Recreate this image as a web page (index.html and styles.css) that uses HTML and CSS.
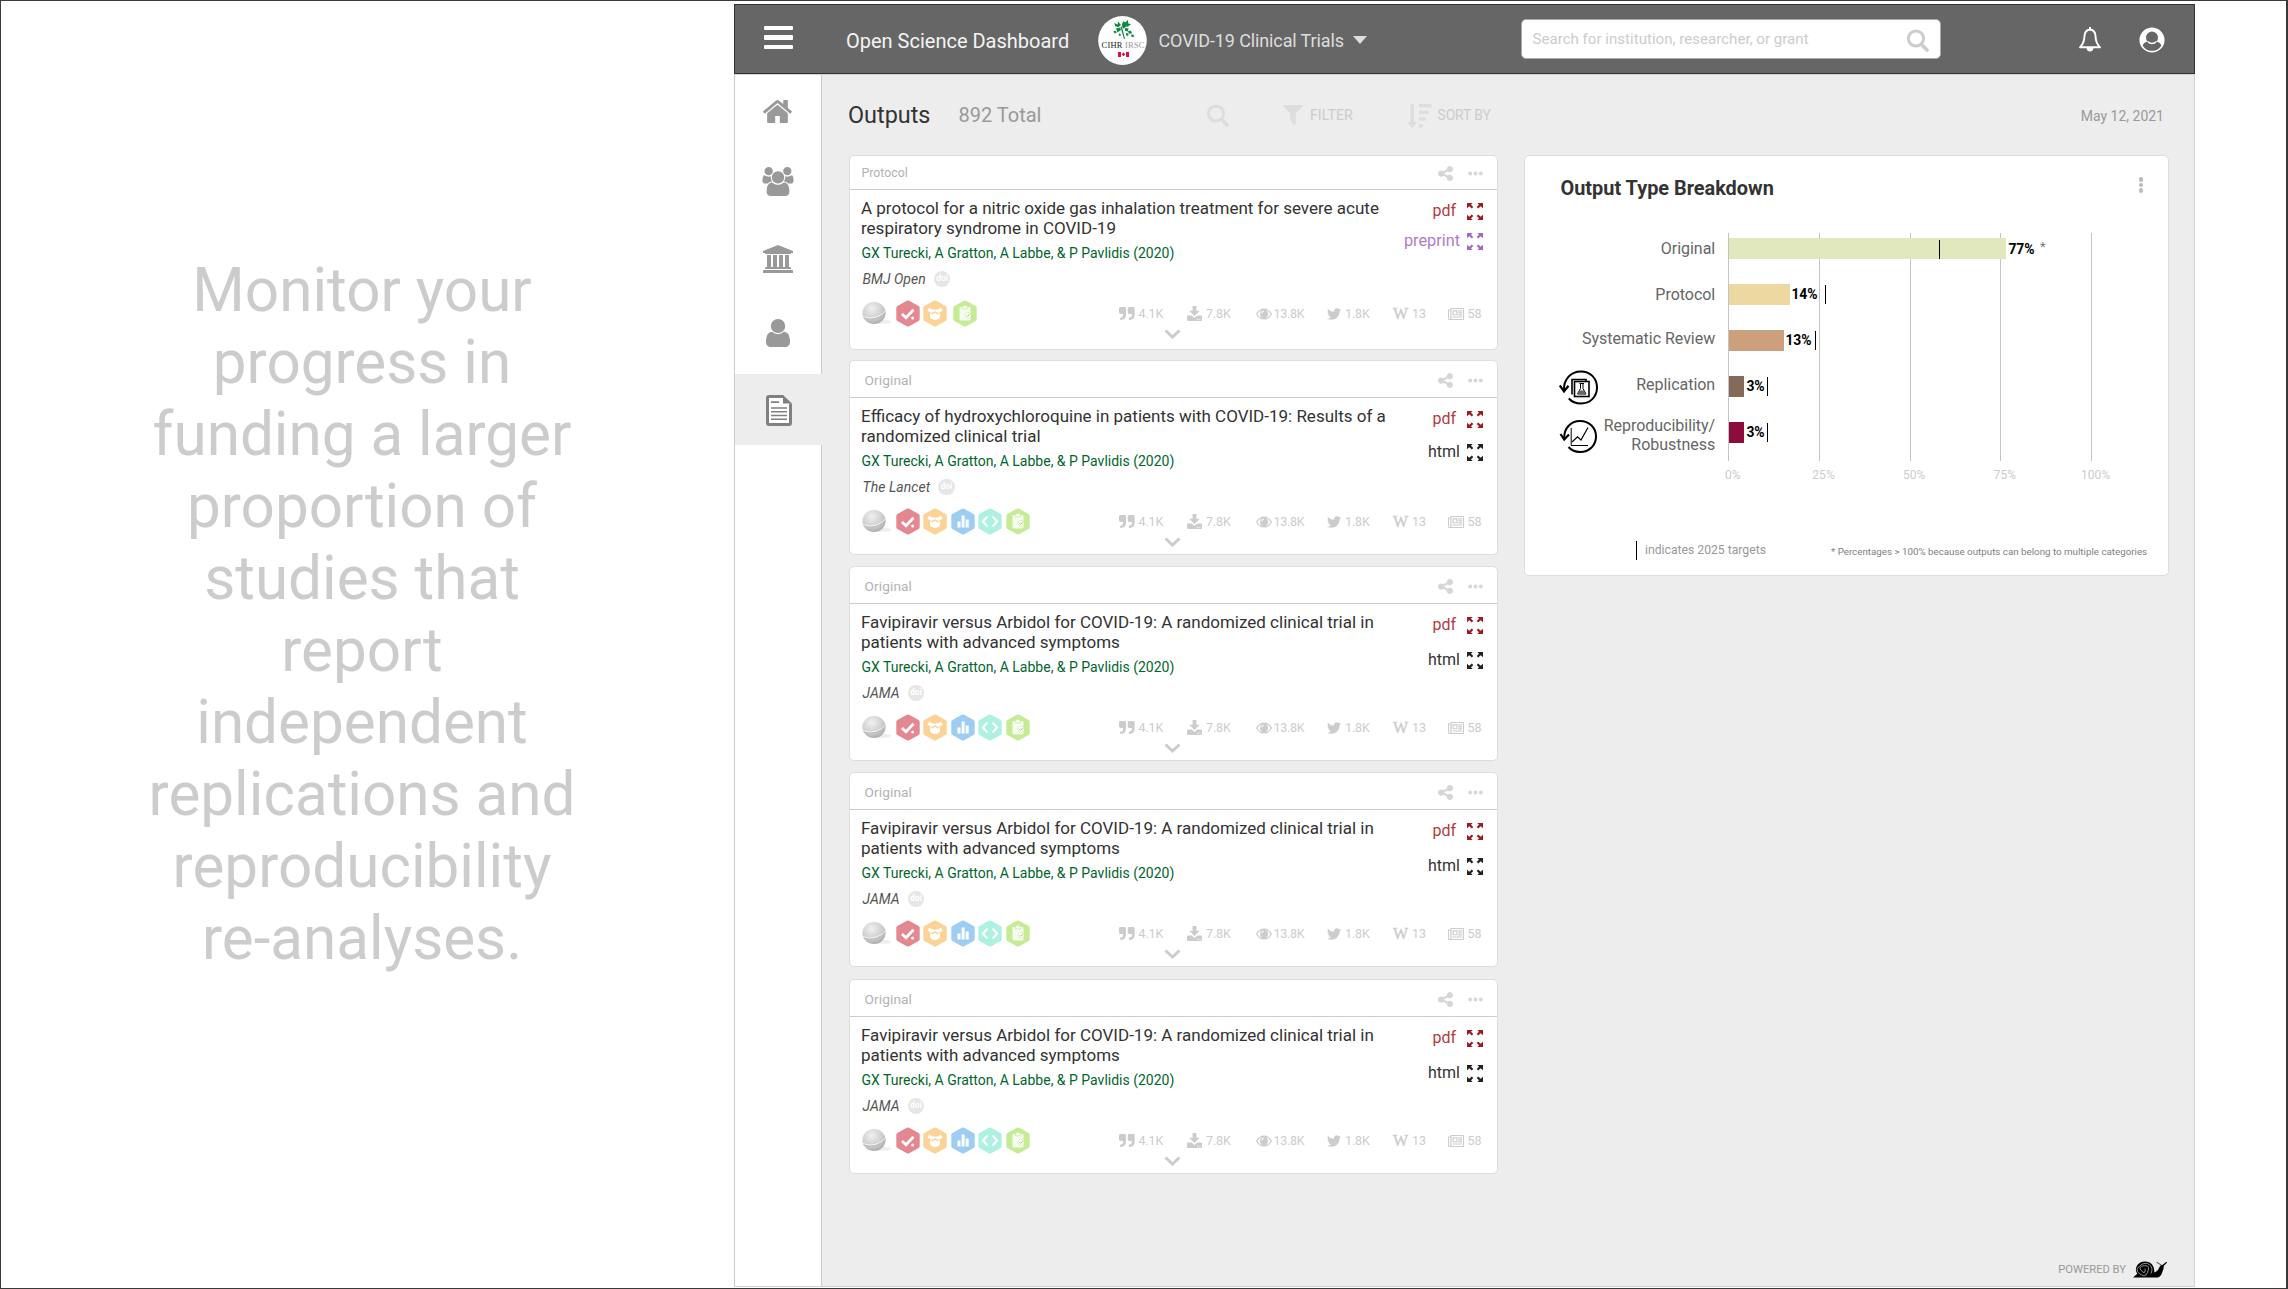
FILE: index.html
```
<!DOCTYPE html>
<html lang="en">
<head>
<meta charset="utf-8">
<title>Open Science Dashboard</title>
<link rel="stylesheet" href="styles.css">
</head>
<body>
<svg class="sprite" aria-hidden="true">
  <defs>
    <radialGradient id="ball-fill" cx=".4" cy=".3" r=".75"><stop offset="0" stop-color="#f0f0f0"/><stop offset=".6" stop-color="#cfcfcf"/><stop offset="1" stop-color="#a8a8a8"/></radialGradient>
  </defs>
  <symbol id="i-home" viewBox="89 253 1614 1283" preserveAspectRatio="none"><path d="M1472 992v480q0 26-19 45t-45 19h-384v-384h-256v384h-384q-26 0-45-19t-19-45v-480q0-1 .5-3t.5-3l575-474 575 474q1 2 1 6zm223-69l-62 74q-8 9-21 11h-3q-13 0-21-7l-692-577-692 577q-12 8-24 7-13-2-21-11l-62-74q-8-10-7-23.5t11-21.5l719-599q32-26 76-26t76 26l244 204v-195q0-14 9-23t23-9h192q14 0 23 9t9 23v408l219 182q10 8 11 21.5t-7 23.5z"/></symbol>
  <symbol id="i-users" viewBox="0 0 1920 1792"><path d="M593 896q-162 5-265 128h-134q-82 0-138-40.5t-56-118.5q0-353 124-353 6 0 43.5 21t97.5 42.5 119 21.5q67 0 133-23-5 37-5 66 0 139 81 256zm1071 637q0 120-73 189.5t-194 69.5h-874q-121 0-194-69.5t-73-189.5q0-53 3.5-103.5t14-109 26.5-108.5 43-97.5 62-81 85.5-53.5 111.5-20q10 0 43 21.5t73 48 107 48 135 21.5 135-21.5 107-48 73-48 43-21.5q61 0 111.5 20t85.5 53.5 62 81 43 97.5 26.5 108.5 14 109 3.5 103.5zm-1024-1277q0 106-75 181t-181 75-181-75-75-181 75-181 181-75 181 75 75 181zm704 384q0 159-112.5 271.5t-271.5 112.5-271.5-112.5-112.5-271.5 112.5-271.5 271.5-112.5 271.5 112.5 112.5 271.5zm576 225q0 78-56 118.5t-138 40.5h-134q-103-123-265-128 81-117 81-256 0-29-5-66 66 23 133 23 59 0 119-21.5t97.5-42.5 43.5-21q124 0 124 353zm-128-609q0 106-75 181t-181 75-181-75-75-181 75-181 181-75 181 75 75 181z"/></symbol>
  <symbol id="i-bank" viewBox="0 0 1920 1792"><path d="M960 0l960 384v128h-128q0 26-20.5 45t-48.5 19h-1526q-28 0-48.5-19t-20.5-45h-128v-128zm-704 640h256v768h128v-768h256v768h128v-768h256v768h128v-768h256v768h59q28 0 48.5 19t20.5 45v64h-1664v-64q0-26 20.5-45t48.5-19h59v-768zm1595 960q28 0 48.5 19t20.5 45v128h-1920v-128q0-26 20.5-45t48.5-19h1782z"/></symbol>
  <symbol id="i-user" viewBox="256 128 1280 1536" preserveAspectRatio="none"><path d="M1536 1399q0 109-62.5 187t-150.5 78h-854q-88 0-150.5-78t-62.5-187q0-85 8.5-160.5t31.5-152 58.5-131 94-89 134.5-34.5q131 128 313 128t313-128q76 0 134.5 34.5t94 89 58.5 131 31.5 152 8.5 160.5zm-256-887q0 159-112.5 271.5t-271.5 112.5-271.5-112.5-112.5-271.5 112.5-271.5 271.5-112.5 271.5 112.5 112.5 271.5z"/></symbol>
  <symbol id="i-doc" viewBox="0 0 26 31"><path fill="#fff" d="M1.5 1.5H18L24.500 8V29.500H1.500Z"/><path fill="none" stroke="currentColor" stroke-width="3" stroke-linejoin="round" d="M17.500 1.500H3Q1.500 1.500 1.500 3V28Q1.500 29.500 3 29.500H23Q24.500 29.500 24.500 28V8.500"/><path d="M17 0L26 8.500H17Z"/><path d="M5 6.300h8v1.800H5zM5 12.200h16v1.500H5zM5 16h16v1.500H5zM5 19.800h16v1.500H5zM5 23.500h16V25H5z"/></symbol>
  <symbol id="i-search" viewBox="0 0 23 23"><circle cx="10" cy="9.500" r="7.600" fill="none" stroke="currentColor" stroke-width="3"/><path d="M15.500 15.500l5.500 5.500" stroke="currentColor" stroke-width="3.600" stroke-linecap="round"/></symbol>
  <symbol id="i-filter" viewBox="192 256 1408 1408" preserveAspectRatio="none"><path d="M1595 295q17 41-14 70l-493 493v742q0 42-39 59-13 5-25 5-27 0-45-19l-256-256q-19-19-19-45v-486l-493-493q-31-29-14-70 17-39 59-39h1280q42 0 59 39z"/></symbol>
  <symbol id="i-sort" viewBox="0 0 25 25"><path d="M3.500 1h3.500v18h3L5.200 25 .4 19h3.100zM12 1h12.500v3.500H12zM12 7.700h9.500v3.300H12zM12 14.500h6.500v3.300H12zM12 21.200h3.800v3.300H12z"/></symbol>
  <symbol id="i-share" viewBox="128 128 1536 1536"><path d="M1344 1024q133 0 226.500 93.500t93.500 226.500-93.500 226.500-226.500 93.500-226.500-93.500-93.500-226.500q0-12 2-34l-360-180q-92 86-218 86-133 0-226.500-93.500t-93.500-226.500 93.500-226.500 226.500-93.500q126 0 218 86l360-180q-2-22-2-34 0-133 93.500-226.500t226.500-93.500 226.500 93.500 93.500 226.500-93.500 226.500-226.500 93.500q-126 0-218-86l-360 180q2 22 2 34t-2 34l360 180q92-86 218-86z"/></symbol>
  <symbol id="i-dots" viewBox="0 0 15 5"><circle cx="2.200" cy="2.500" r="1.900"/><circle cx="7.500" cy="2.500" r="1.900"/><circle cx="12.800" cy="2.500" r="1.900"/></symbol>
  <symbol id="i-expand" viewBox="0 0 16 17"><g id="corner"><path d="M0 0h5.600L4 1.700l2.300 2.400-1.500 1.500-2.500-2.400L0 5.300z"/></g><use href="#corner" transform="matrix(-1 0 0 1 16 0)"/><use href="#corner" transform="matrix(1 0 0 -1 0 17)"/><use href="#corner" transform="matrix(-1 0 0 -1 16 17)"/></symbol>
  <symbol id="i-quote" viewBox="0 0 16 13"><path id="qm" d="M1.400 0h4.200Q7 0 7 1.400V7.500Q7 12.500 2 13H1.200v-2.600H2Q4.200 10 4.200 7.400V7H1.400Q0 7 0 5.600V1.400Q0 0 1.400 0z"/><use href="#qm" x="8.700"/></symbol>
  <symbol id="i-download" viewBox="0 0 15 15"><path d="M5.600 0h3.800v4.700h3.400L7.500 10 2.200 4.700h3.400z"/><path fill-rule="evenodd" d="M1 9.500h3.600l2.900 2.400 2.900-2.400H14q1 0 1 1V14q0 1-1 1H1q-1 0-1-1v-3.500q0-1 1-1zM10 12.700v1.100h1.100v-1.100zM12.300 12.700v1.100h1.100v-1.100z"/></symbol>
  <symbol id="i-eye" viewBox="0 0 16 12"><path fill-rule="evenodd" d="M0 6Q3 .5 8 .5T16 6Q13 11.500 8 11.500T0 6zM1.500 6Q3.300 9.600 6 10.100 3.900 8.800 3.900 6T6 1.900Q3.300 2.400 1.500 6zM14.500 6Q12.700 2.400 10 1.900 12.100 3.200 12.100 6T10 10.100Q12.700 9.600 14.500 6zM8 2.700Q5.400 2.900 5.300 5.600l.8.100Q6.200 3.700 8 3.500z"/></symbol>
  <symbol id="i-twitter" viewBox="108 256 1576 1280"><path d="M1684 408q-67 98-162 167 1 14 1 42 0 130-38 259.500t-115.500 248.500-184.500 210.500-258 146-323 54.500q-271 0-496-145 35 4 78 4 225 0 401-138-105-2-188-64.500t-114-159.500q33 5 61 5 43 0 85-11-112-23-185.500-111.500t-73.500-205.500v-4q68 38 146 41-66-44-105-115t-39-154q0-88 44-163 121 149 294.500 238.500t371.500 99.500q-8-38-8-74 0-134 94.500-228.500t228.500-94.500q140 0 236 102 109-21 205-78-37 115-142 178 93-10 186-50z"/></symbol>
  <symbol id="i-news" viewBox="0 0 16 12"><path fill-rule="evenodd" d="M2.500 0H15q1 0 1 1v10q0 1-1 1H1.500Q0 12 0 10.500V1.500h2.500zM3.500 1.100V10.900H14.900V1.100zM1 2.500v8q0 .5.500.5t.8-.5v-8z"/><path fill-rule="evenodd" d="M4.500 2.300h5v5h-5zM5.600 3.400v2.800h2.800V3.400zM10.300 2.300h3.700v1.200h-3.700zM10.300 4.300h3.700v1.200h-3.700zM10.300 6.200h3.700v1.200h-3.700zM4.500 8.400h9.500v1.200H4.500z"/></symbol>
  <symbol id="i-chevron" viewBox="0 0 17 10"><path d="M1.500 1.500l7 6.500 7-6.500" fill="none" stroke="currentColor" stroke-width="3"/></symbol>
  <symbol id="i-ball" viewBox="0 0 30 24"><ellipse cx="20" cy="20.800" rx="9.500" ry="2" fill="#eee"/><ellipse cx="12" cy="12" rx="11.600" ry="11" fill="url(#ball-fill)"/><path d="M.8 15.500Q7 18.500 14 16.200T23.300 10" fill="none" stroke="#f6f6f6" stroke-width="1"/><path d="M1.300 16.800Q8 19.500 14.500 17.300T23.500 11.500" fill="none" stroke="#b5b5b5" stroke-width=".7"/></symbol>
  <symbol id="hex" viewBox="0 0 24 27"><path d="M10.800.8Q12 .2 13.200.8L22.600 6Q23.700 6.700 23.700 8V19Q23.700 20.300 22.600 21L13.200 26.200Q12 26.800 10.800 26.200L1.400 21Q.3 20.300.3 19V8Q.3 6.700 1.400 6Z"/></symbol>
  <symbol id="b-check" viewBox="0 0 24 27"><use href="#hex" fill="#e48790" width="24" height="27"/><path d="M6 14l4 3.800 7.500-8" fill="none" stroke="#fff" stroke-width="2.800"/><circle cx="16.600" cy="18" r="1.500" fill="#fff"/></symbol>
  <symbol id="b-box" viewBox="0 0 24 27"><use href="#hex" fill="#fcd397" width="24" height="27"/><path fill="#fff" d="M6.300 7.800Q9 10 12 9.800 15 10 17.700 7.800l2 2.900-4.500 2.400L12 10.900l-3.200 2.200-4.500-2.400zM7 12.800l2.400 1.700L12 12.800l2.600 1.700 2.400-1.700v4.300Q15.500 20 12 20t-5-2.900z"/></symbol>
  <symbol id="b-data" viewBox="0 0 24 27"><use href="#hex" fill="#9ecdf3" width="24" height="27"/><path fill="#fff" d="M6.500 13.500h3v6h-3zM10.600 7.500h3v12h-3zM14.700 11.500h3v8h-3z"/></symbol>
  <symbol id="b-code" viewBox="0 0 24 27"><use href="#hex" fill="#aef1e1" width="24" height="27"/><path fill="none" stroke="#fff" stroke-width="2" d="M9.500 8.500L4.800 13.500l4.700 5M14.500 8.500l4.700 5-4.700 5"/></symbol>
  <symbol id="b-clip" viewBox="0 0 24 27"><use href="#hex" fill="#c5eb94" width="24" height="27"/><rect x="6.500" y="7" width="11" height="13.500" rx="1" fill="#f6fbef"/><path fill="#fff" stroke="#c5eb94" stroke-width=".8" d="M9.300 8.800V6.600q2.700-2.500 5.400 0v2.200z"/><circle cx="15" cy="15.300" r="3" fill="#fff" stroke="#c5eb94" stroke-width=".5"/><path d="M13.500 15.200l1.200 1.200 2.200-2.500" fill="none" stroke="#9cc860" stroke-width=".9"/></symbol>
  <symbol id="i-replication" viewBox="0 0 40 35"><g fill="none" stroke="#000"><path stroke-width="2" d="M5 20C4.500 9.500 11.500 1.500 22 1.500C31.500 1.500 38 8.500 38 17.500S31.500 33.500 22 33.500C17 33.500 13 32 9.800 28.500"/><path stroke-width="2.200" d="M.8 15.500L5 21.500 9.500 15.800"/><path stroke-width="1.600" d="M13 24.500V9.500h14V12"/><rect x="15.500" y="11.500" width="14.500" height="15" stroke-width="1.600"/><path stroke-width="1" d="M20.500 13.500h4.500M21.500 14v4.500L18.500 24h8.500L24 18.500V14"/></g><path d="M20.500 20.500h4.500l2 3.800h-8.500z"/></symbol>
  <symbol id="i-repro" viewBox="0 0 40 35"><g fill="none" stroke="#000"><path stroke-width="2" d="M5.200 19C5 9 12 2 21 2C30.500 2 37 9 37 17.500S30.500 33 21 33C16.500 33 12.500 31.500 9.500 28"/><path stroke-width="2.200" d="M1.500 15L5.200 20.500 10 15.500"/><path stroke-width="1" d="M12.200 9v17.500H29"/><path stroke-width="1.200" d="M13 23l5.500-5.200L22 21l7-12.500"/></g></symbol>
  <symbol id="i-snail" viewBox="0 0 35 17"><path d="M0 16.500L4.300 12.800Q1.500 8.500 4.200 4.300T12.500.5 20 5Q22 9 21 11.500 25 10.500 26.300 6.500 27 4.500 28 4.300L23.500 1.500l.4-.6L29 4.200 33.500.8l.6.6-3.400 3.700Q31 7 29.700 10 28 15.800 25 16.500z"/><path fill="none" stroke="#ededed" stroke-width=".6" d="M18 12.500Q20.500 7 16.500 3.700T7 4.700 6.300 12.500 13 14 15.500 8 10.700 4.800 7.800 9 11.500 11.300 12 7.500"/></symbol>
</svg>

<div class="page">
  <aside class="message">Monitor your<br>progress in<br>funding a larger<br>proportion of<br>studies that<br>report<br>independent<br>replications and<br>reproducibility<br>re-analyses.</aside>

  <div class="app">
    <header class="topbar">
      <div class="menu"><span></span><span></span><span></span></div>
      <div class="brand">Open Science Dashboard</div>
      <svg class="org-logo" viewBox="0 0 49 49"><ellipse cx="24.500" cy="24.500" rx="24.300" ry="24.400" fill="#fff"/><g fill="#0b8a43"><path d="M16 7l3.500 1.500L20 5.500l3 3.500-2.500 2-3-.5zM24 8l1.500-3 1.500 1.500L30 4l.3 3.500 2.700.8-3 2.200-2.500.3-1.500 2-1.800-1.600zM18 12.500l4-1 1 2.500-3.500 2.500zM27 12l3.500.5-.5 3-3-.8z"/><path d="M22.500 11l1.300-.5L27 22.500l-1 .8z"/><path d="M15.500 15l2.500-.3.500 2-2 .8zM30 15l3-.3 1 2.500-3 .5zM28 17l2.500.5-.3 2.500-2-.5zM33 18.500l2.500.3.500 2.500-2.500-.5zM21 17.500l1.800.5-.3 2-1.800-.5z"/></g><text x="3.500" y="32" class="org-name" textLength="43">CIHR <tspan fill="#999">IRSC</tspan></text><path fill="#dc143c" d="M20 36h3v5h-3zM28 36h3v5h-3zM25.500 36.300l1.800 2.200-1.800 1.700-1.800-1.700z"/></svg>
      <div class="scope">COVID-19 Clinical Trials</div>
      <span class="caret"></span>
      <div class="search"><span>Search for institution, researcher, or grant</span><svg class="search-icon"><use href="#i-search"/></svg></div>
      <svg class="bell" viewBox="0 0 24 25"><path fill="none" stroke="#fff" stroke-width="1.900" stroke-linejoin="round" d="M12 2.500Q17.300 3.300 17.500 9 17.700 16 22 20.300H2Q6.300 16 6.500 9 6.700 3.300 12 2.500z"/><path fill="#fff" d="M11 0h2v3h-2zM8.500 21h7q-.5 3.500-3.500 3.500T8.500 21z"/></svg>
      <svg class="account" viewBox="0 0 26 26"><circle cx="13" cy="13" r="11.700" fill="none" stroke="#fff" stroke-width="1.700"/><path fill="#fff" fill-rule="evenodd" d="M13 1.500A11.500 11.500 0 0 0 3.200 19.500Q4.200 15.500 8.500 14.500A6 6 0 1 1 17.500 14.500Q21.800 15.500 22.800 19.500A11.500 11.500 0 0 0 13 1.500z"/><path fill="none" stroke="#fff" stroke-width="1.200" d="M8.500 14.500Q13 18.500 17.500 14.500"/></svg>
    </header>

    <div class="body">
      <nav class="sidebar">
        <a><svg width="29" height="23"><use href="#i-home"/></svg></a>
        <a><svg width="32" height="29"><use href="#i-users"/></svg></a>
        <a><svg width="30" height="28"><use href="#i-bank"/></svg></a>
        <a><svg width="24" height="28"><use href="#i-user"/></svg></a>
        <a class="active"><svg width="26" height="31"><use href="#i-doc"/></svg></a>
      </nav>

      <main class="content">
        <div class="toolbar">
          <h1>Outputs</h1>
          <span class="total">892 Total</span>
          <svg class="tool-search"><use href="#i-search"/></svg>
          <span class="tool filter"><svg width="20" height="20"><use href="#i-filter"/></svg>FILTER</span>
          <span class="tool sort"><svg width="25" height="25"><use href="#i-sort"/></svg>SORT BY</span>
          <span class="date">May 12, 2021</span>
        </div>

        <div class="columns">
          <section class="outputs" id="outputs"></section>

          <section class="panel">
            <div class="panel-head"><h2>Output Type Breakdown</h2><span class="kebab"><i></i><i></i><i></i></span></div>
            <div class="chart">
              <div class="gridlines"><i></i><i></i><i></i><i></i><i></i></div>
              <div class="row"><div class="name">Original</div><div class="plot"><span class="bar original" style="width:277px"></span><b>77%</b><sup>*</sup><span class="target" style="left:210px"></span></div></div>
              <div class="row"><div class="name">Protocol</div><div class="plot"><span class="bar protocol" style="width:61px"></span><b>14%</b><span class="target" style="left:96px"></span></div></div>
              <div class="row"><div class="name raised">Systematic Review</div><div class="plot"><span class="bar review" style="width:55px"></span><b>13%</b><span class="target" style="left:86px"></span></div></div>
              <div class="row"><div class="name raised"><svg><use href="#i-replication"/></svg>Replication</div><div class="plot"><span class="bar replication" style="width:15px"></span><b>3%</b><span class="target" style="left:38px"></span></div></div>
              <div class="row"><div class="name two-line"><svg><use href="#i-repro"/></svg><span>Reproducibility/<br>Robustness</span></div><div class="plot"><span class="bar repro" style="width:15px"></span><b>3%</b><span class="target" style="left:38px"></span></div></div>
              <div class="axis"><span>0%</span><span>25%</span><span>50%</span><span>75%</span><span>100%</span></div>
            </div>
            <div class="legend"><span class="mark"></span><span class="meaning">indicates 2025 targets</span><span class="note">* Percentages &gt; 100% because outputs can belong to multiple categories</span></div>
          </section>
        </div>

        <footer class="powered">POWERED BY<svg width="35" height="17"><use href="#i-snail"/></svg></footer>
      </main>
    </div>
  </div>
</div>
<script src="outputs.js"></script>
</body>
</html>
```
FILE: outputs.js
```
const authors = 'GX Turecki, A Gratton, A Labbe, &amp; P Pavlidis (2020)';
const allBadges = ['check', 'box', 'data', 'code', 'clip'];
const favipiravir = {
  type: 'Original', journal: 'JAMA', badges: allBadges, second: 'html', variant: 'wide-links',
  title: 'Favipiravir versus Arbidol for COVID-19: A randomized clinical trial in<br>patients with advanced symptoms'
};
const outputs = [
  { type: 'Protocol', journal: 'BMJ Open', badges: ['check', 'box', 'clip'], second: 'preprint', variant: 'protocol-card',
    title: 'A protocol for a nitric oxide gas inhalation treatment for severe acute<br>respiratory syndrome in COVID-19' },
  { type: 'Original', journal: 'The Lancet', badges: allBadges, second: 'html', variant: '',
    title: 'Efficacy of hydroxychloroquine in patients with COVID-19: Results of a<br>randomized clinical trial' },
  favipiravir, favipiravir, favipiravir
];
const icon = (id, w, h) => `<svg width="${w}" height="${h}"><use href="#${id}"/></svg>`;

document.getElementById('outputs').innerHTML = outputs.map(o => `
  <article class="card ${o.variant}">
    <div class="card-head"><span>${o.type}</span>${icon('i-share', 15, 15)}${icon('i-dots', 15, 5)}</div>
    <div class="card-body">
      <div class="summary">
        <div>
          <h3>${o.title}</h3>
          <p class="authors">${authors}</p>
          <p class="journal"><em>${o.journal}</em><span class="doi">doi</span></p>
        </div>
        <div class="links">
          <a class="pdf">pdf${icon('i-expand', 16, 17)}</a>
          <a class="${o.second}">${o.second}${icon('i-expand', 16, 17)}</a>
        </div>
      </div>
      <div class="metrics">
        ${icon('i-ball', 30, 24)}
        <div class="badges">${o.badges.map(b => icon('b-' + b, 24, 27)).join('')}</div>
        <div class="stats">
          <span>${icon('i-quote', 16, 13)}4.1K</span>
          <span>${icon('i-download', 15, 15)}7.8K</span>
          <span class="views">${icon('i-eye', 16, 12)}13.8K</span>
          <span>${icon('i-twitter', 14, 12)}1.8K</span>
          <span><i class="wiki">W</i>13</span>
          <span>${icon('i-news', 16, 12)}58</span>
        </div>
      </div>
      <div class="more">${icon('i-chevron', 17, 10)}</div>
    </div>
  </article>`).join('');
```
FILE: styles.css
```
* { box-sizing: border-box; margin: 0; padding: 0; }
body { font-family: Roboto, "Liberation Sans", sans-serif; background: #fff; color: #333; }
svg { display: block; flex: none; fill: currentColor; overflow: visible; }
.sprite { position: absolute; width: 0; height: 0; }

.page { display: flex; width: 2288px; height: 1289px; border: 1px solid #3a3839; border-right-width: 2px; }
.message { width: 733px; padding: 254px 11px 0 0; font-size: 60.200px; line-height: 72.050px; text-align: center; color: #ccc; }
.app { display: flex; flex-direction: column; width: 1461px; height: 1283px; margin-top: 3px; }

/* Top bar */
.topbar { display: flex; align-items: center; height: 70px; padding-left: 29px; background: #666; border: 1px solid #333; }
.menu { display: flex; flex-direction: column; gap: 5px; width: 82px; margin-bottom: 3px; }
.menu span { width: 29px; height: 4.500px; background: #fff; border-radius: 1px; }
.brand { width: 252px; font-size: 20px; color: #f4f4f4; padding-top: 4px; white-space: nowrap; }
.org-logo { width: 49px; height: 49px; margin-top: 2px; }
.org-name { font: 8.500px "Liberation Serif", serif; fill: #222; }
.scope { width: 194px; margin-left: 11.500px; padding-top: 2px; font-size: 18px; letter-spacing: -.12px; color: #ddd; white-space: nowrap; }
.caret { border: 7.500px solid transparent; border-top: 8px solid #ddd; border-bottom: 0; margin-top: 2px; }
.search { display: flex; justify-content: space-between; width: 420px; height: 40px; margin-left: 154px; padding: 0 10px 0 11px; align-items: center; background: #fff; border: 1px solid #aaa; border-radius: 5px; font-size: 15.100px; color: #ccc; }
.search-icon { width: 25px; height: 23px; margin-top: 3px; color: #ccc; }
.bell { width: 24px; height: 25px; margin-left: 137.500px; margin-top: 1px; }
.account { width: 26px; height: 26px; margin-left: 37px; margin-top: 1px; }

/* Sidebar */
.body { display: flex; flex: 1; border: solid #d2d2d2; border-width: 1px 1px 1px 0; }
.sidebar { display: flex; flex-direction: column; width: 88px; background: #fff; border: solid #ccc; border-width: 0 1px; color: #999; }
.sidebar a { display: flex; align-items: center; justify-content: center; padding: 0 1px 2px 0; }
.sidebar a:nth-child(1) { height: 74px; }
.sidebar a:nth-child(2) { height: 66px; }
.sidebar a:nth-child(3) { height: 90px; }
.sidebar a:nth-child(4) { height: 58px; padding-right: 0; }
.sidebar a.active { height: 71px; margin: 11px -2px 0 0; padding: 2px 0 0 0; background: #ededed; color: #808080; }

/* Content */
.content { display: flex; flex-direction: column; flex: 1; background: #ededed; padding-left: 27px; }
.toolbar { display: flex; align-items: center; height: 80px; margin-left: -1px; padding-right: 30px; color: #ccc; }
h1 { width: 110.500px; font-size: 23.400px; font-weight: 400; color: #333; padding-bottom: 1px; }
.total { width: 247px; font-size: 20px; color: #999; padding-bottom: 1px; }
.tool-search { width: 23px; height: 23px; margin-right: 54px; color: #ddd; }
.tool { display: flex; align-items: center; font-size: 14.200px; }
.tool svg { color: #ddd; }
.filter { width: 124px; gap: 7.500px; }
.sort { gap: 6px; font-size: 13.900px; letter-spacing: -.1px; }
.date { margin-left: auto; padding-top: 1px; font-size: 14px; color: #999; }
.columns { display: flex; align-items: flex-start; gap: 26px; }

/* Output cards */
.outputs { width: 649px; }
.card { height: 195px; margin-bottom: 11px; background: #fff; border: 1px solid #ddd; border-radius: 5px; }
.card:last-child { margin-top: 12px; }
.card-head { display: flex; align-items: center; height: 37px; padding: 2px 14px 0 14.500px; border-bottom: 1px solid #ccc; font-size: 13.700px; letter-spacing: .1px; color: #b2b2b2; }
.card-head span { margin-right: auto; }
.card-head svg { margin-left: 15px; color: #d6d6d6; }
.card-body { padding: 8px 13.500px 0 11px; }
.summary { display: flex; justify-content: space-between; height: 101.500px; }
h3 { font-size: 17px; line-height: 20px; font-weight: 400; letter-spacing: 0; color: #333; white-space: nowrap; }
.authors { margin-top: 5px; padding-left: .500px; font-size: 14px; line-height: 20px; color: #00662c; }
.journal { display: flex; align-items: center; gap: 8px; height: 20px; margin-top: 6px; padding-left: 1.500px; font-size: 14px; color: #555; }
.journal em { letter-spacing: .05px; }
.doi { width: 16.500px; height: 16.500px; border-radius: 50%; background: #e6e6e6; color: #fff; font-size: 8.500px; line-height: 15.500px; font-weight: 700; text-align: center; }
.links { display: flex; flex-direction: column; align-items: flex-end; gap: 13px; padding-top: 3px; padding-right: .500px; font-size: 16px; line-height: 20px; }
.links a { display: flex; align-items: center; gap: 7px; }
.links .pdf { gap: 11px; color: #b23a40; }
.links .pdf svg { color: #9e1b22; }
.links .html svg { color: #222; }
.links .preprint { font-size: 16.300px; color: #b07cc6; }
.links .preprint svg { color: #a569bd; }
.wide-links .links { gap: 15px; }
.metrics { display: flex; align-items: center; height: 27px; padding-left: 1px; }
.badges { display: flex; gap: 3.400px; margin-left: 4px; }
.stats { display: grid; grid-template-columns: 68.500px 69px 71px 66px 54.500px 36px; margin-left: auto; padding-top: 1px; font-size: 12.500px; color: #ccc; }
.stats span { display: flex; align-items: center; gap: 4px; letter-spacing: -.1px; white-space: nowrap; }
.stats .views { gap: 1.500px; letter-spacing: -.3px; }
.wiki { width: 15px; font: 16px "Liberation Serif", serif; line-height: 14px; -webkit-text-stroke: .4px #ccc; }
.more { display: flex; justify-content: center; margin: 2px 0 0 1px; color: #ccc; }
.protocol-card { margin-bottom: 10px; }
.protocol-card .card-head { height: 34px; padding: 1px 14px 0 11.500px; font-size: 12.300px; letter-spacing: 0; }
.protocol-card .links { gap: 10px; }
.protocol-card .badges svg:last-child { margin-left: 2.500px; }

/* Breakdown panel */
.panel { width: 645px; height: 421px; padding-left: 34px; background: #fff; border: 1px solid #ddd; border-radius: 5px; }
.panel-head { display: flex; justify-content: space-between; height: 70px; padding: 21px 25px 0 1.500px; }
h2 { font-size: 19.900px; line-height: 24px; font-weight: 700; letter-spacing: 0; color: #333; }
.kebab { display: flex; flex-direction: column; gap: 1.200px; }
.kebab i { width: 4.500px; height: 4.500px; border-radius: 50%; background: #bbb; }
.chart { position: relative; }
.gridlines { position: absolute; left: 169px; top: 7px; display: flex; justify-content: space-between; width: 364px; height: 228px; }
.gridlines i { width: 1px; background: #c4c4c4; }
.row { position: relative; display: flex; height: 45.800px; }
.name { display: flex; align-items: center; justify-content: flex-end; width: 156.200px; font-size: 16px; letter-spacing: -.03px; line-height: 19px; color: #666; text-align: right; white-space: nowrap; }
.name.raised { padding-bottom: 3px; }
.name svg { width: 40px; height: 35px; margin: 5px auto 0 0; }
.name.two-line { padding-top: 6px; }
.two-line svg { margin-top: 2px; }
.plot { position: relative; display: flex; align-items: center; flex: 1; margin-left: 13.800px; }
.bar { height: 21px; margin-right: 2.500px; }
.bar.protocol + b, .bar.review + b { margin-left: -1px; }
.plot b { font-size: 13.900px; letter-spacing: -.1px; color: #000; }
.row:nth-child(n+3) b { padding-bottom: 1px; }
.plot sup { margin-left: 5.500px; padding-bottom: 3px; font-size: 13px; line-height: 14px; color: #777; }
.original { background: #e1e8be; }
.protocol { background: #edd8a2; }
.review { background: #cda07d; }
.replication { background: #836a59; }
.repro { background: #8c0d3c; }
.target { position: absolute; top: 13.500px; width: 1px; height: 19px; background: #000; }
.axis { display: flex; margin: 13px 0 0 128.500px; font-size: 12px; color: #ccc; }
.axis span { width: 90.700px; text-align: center; letter-spacing: .1px; }
.legend { display: flex; align-items: center; margin-top: 59px; padding-left: 77px; white-space: nowrap; }
.mark { width: 1px; height: 19px; background: #000; }
.meaning { width: 186px; margin-left: 8px; font-size: 12.200px; color: #999; }
.note { padding-top: 2px; font-size: 9.770px; color: #808080; }

.powered { display: flex; justify-content: flex-end; align-items: center; gap: 6.500px; margin: auto 26.500px 8px 0; font-size: 11.200px; color: #999; }
.powered svg { color: #000; }
```
